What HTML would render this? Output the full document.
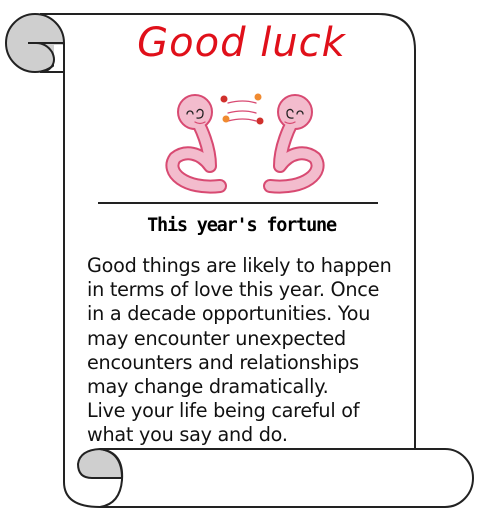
<!DOCTYPE html>
<html><head><meta charset="utf-8"><style>
html,body{margin:0;padding:0;background:#fff;width:483px;height:516px;overflow:hidden;position:relative;font-family:"Liberation Sans",sans-serif}
.t{position:absolute;left:0;width:483px;text-align:center}
#title{top:20px;left:0;width:483px;font-size:40px;color:#e0101a;font-family:"DejaVu Sans","Liberation Sans",sans-serif;font-style:italic;letter-spacing:1px}
#sub{top:215px;font-size:18.5px;font-weight:bold;left:0;width:483px;font-family:"DejaVu Sans Mono","Liberation Mono",monospace;letter-spacing:-1.2px}
#body{position:absolute;left:87px;top:254px;font-size:19.2px;line-height:24.2px;color:#111;font-family:"DejaVu Sans","Liberation Sans",sans-serif;letter-spacing:-0.25px;white-space:nowrap}
</style></head><body>
<svg width="483" height="516" style="position:absolute;left:0;top:0">
<path d="M40,14 H378 Q415,14 415,50 V449" fill="none" stroke="#222" stroke-width="2"/>
<path d="M64,43 V482 Q64,507 100,507" fill="none" stroke="#222" stroke-width="2"/>
<circle cx="35" cy="43" r="29" fill="#cfcfcf" stroke="#222" stroke-width="2"/>
<rect x="54" y="45" width="9" height="26" fill="#fff"/>
<path d="M28,43 H64" stroke="#222" stroke-width="2"/>
<path d="M36,43 Q46,43 52,52 Q56,60 52,66 Q48,72 40,72 H64" fill="none" stroke="#222" stroke-width="2"/>
<path d="M100,449 H445 A28,29 0 0 1 445,507 H100" fill="#fff" stroke="#222" stroke-width="2"/>
<path d="M100,449 Q122,452 122,478 H92 Q78,478 78,464 Q80,450 100,449 Z" fill="#cfcfcf" stroke="#222" stroke-width="2"/>
<path d="M100,449 Q124,452 122,480 Q120,504 100,507" fill="none" stroke="#222" stroke-width="2"/>
<line x1="98" y1="203" x2="378" y2="203" stroke="#222" stroke-width="2"/>
<g fill="none" stroke-linecap="round" stroke-linejoin="round">
<g id="sn">
<path d="M192,112 C202,128 210,148 210,166 C200,152 185,150 175,158 C165,172 185,190 220,186" stroke="#d84a72" stroke-width="14"/>
<circle cx="195" cy="112" r="17" fill="#f3bccd" stroke="#d84a72" stroke-width="2"/>
<path d="M192,112 C202,128 210,148 210,166 C200,152 185,150 175,158 C165,172 185,190 220,186" stroke="#f3bccd" stroke-width="10"/>
<circle cx="195" cy="112" r="15" fill="#f3bccd"/>
<path d="M187,114 a3,3 0 0 1 6,0 M197,112 a3,3 0 0 1 6,1 q0,6 -6,5" stroke="#222" stroke-width="1.3"/>
<path d="M195,122 q5,3 10,0" stroke="#d84a72" stroke-width="1.3"/>
</g>
<use href="#sn" transform="translate(490,0) scale(-1,1)"/>
<path d="M228,103 q15,-4 28,0 M228,113 q15,-4 28,0 M228,121 q15,-4 28,0" stroke="#d84a72" stroke-width="1.3"/>
</g>
<circle cx="224" cy="99" r="3.5" fill="#d0302c"/><circle cx="258" cy="97" r="3.5" fill="#f08a30"/>
<circle cx="226" cy="119" r="3.5" fill="#f08a30"/><circle cx="260" cy="121" r="3.5" fill="#d0302c"/>
</svg>
<div id="title" class="t">Good luck</div>
<div id="sub" class="t">This year's fortune</div>
<div id="body">Good things are likely to happen<br>in terms of love this year. Once<br>in a decade opportunities. You<br>may encounter unexpected<br>encounters and relationships<br>may change dramatically.<br>Live your life being careful of<br>what you say and do.</div>
</body></html>
